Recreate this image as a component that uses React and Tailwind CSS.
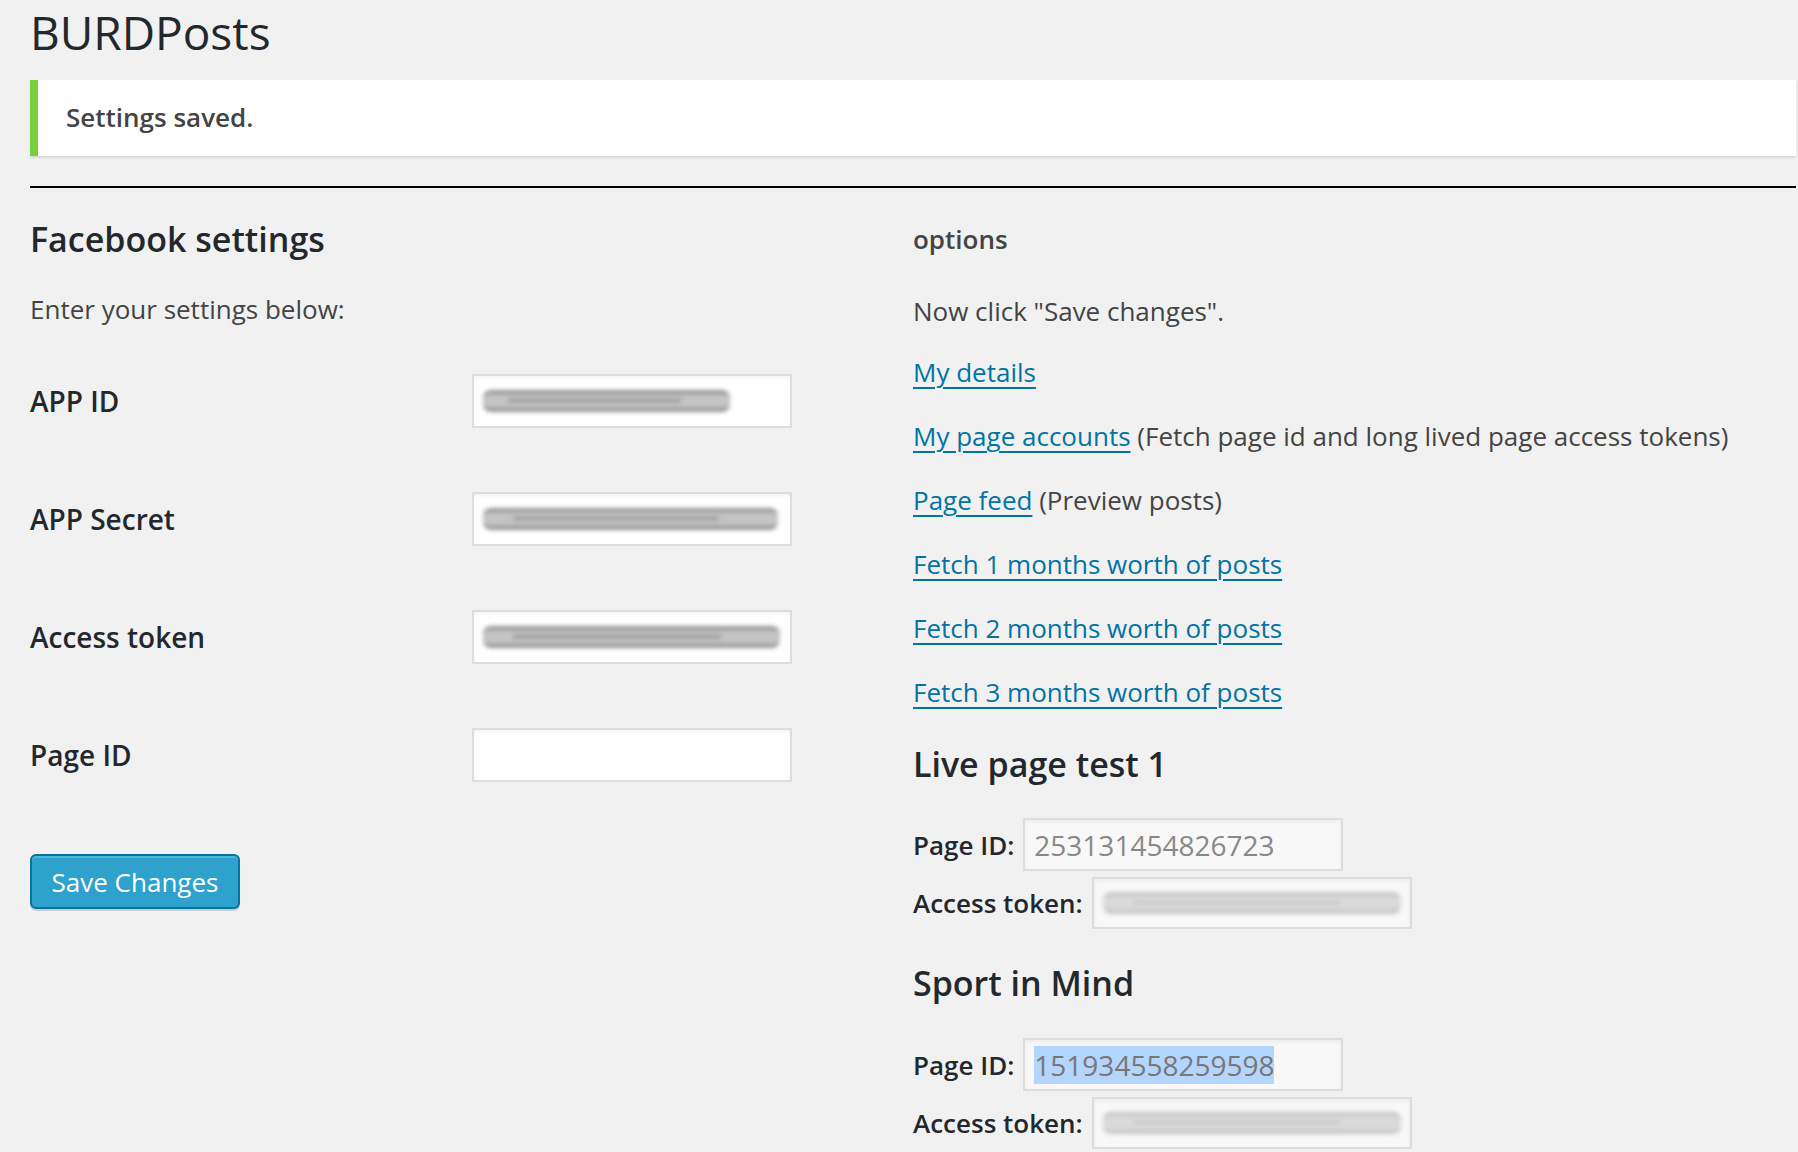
const Smear = ({ w, tone = "dark" }) => (
  <div className="relative h-[22px]" style={{ width: w }}>
    <div
      className={`absolute inset-0 rounded-[8px] blur-[2px] ${
        tone === "dark"
          ? "bg-[#c4c4c4] border-y-[4px] border-[#959595]"
          : "bg-[#dadada] border-y-[4px] border-[#c6c6c6]"
      }`}
    />
    <div
      className={`absolute left-[10%] right-[20%] top-[8px] h-[5px] blur-[2px] ${
        tone === "dark" ? "bg-[#a5a5a5]" : "bg-[#cdcdcd]"
      }`}
    />
  </div>
);

const FieldBox = ({ children, readOnly, h = "h-[54px]" }) => (
  <div
    className={`w-[320px] ${h} border-2 border-[#dddddd] flex items-center px-[9px] shadow-[inset_0_2px_4px_rgba(0,0,0,0.05)] ${
      readOnly ? "bg-[#f8f8f8]" : "bg-white"
    }`}
  >
    {children}
  </div>
);

const SettingRow = ({ label, children }) => (
  <div className="flex items-center h-[54px]">
    <div className="w-[442px] text-[28px] leading-[36px] font-semibold text-[#23282d]">
      {label}
    </div>
    <FieldBox>{children}</FieldBox>
  </div>
);

const PageRow = ({ label, children, className, h }) => (
  <div className={`flex items-center ${className}`}>
    <span className="text-[26px] leading-[36px] font-semibold text-[#23282d] mr-[9px]">
      {label}
    </span>
    <FieldBox readOnly h={h}>
      {children}
    </FieldBox>
  </div>
);

const links = [
  { text: "My details" },
  { text: "My page accounts", note: "(Fetch page id and long lived page access tokens)" },
  { text: "Page feed", note: "(Preview posts)" },
  { text: "Fetch 1 months worth of posts" },
  { text: "Fetch 2 months worth of posts" },
  { text: "Fetch 3 months worth of posts" },
];

export default function App() {
  return (
    <div className="min-h-screen bg-[#f1f1f1] pl-[30px] pr-[2px] text-[#444] font-['Open_Sans',sans-serif] overflow-hidden">
      <h1 className="pt-[3px] text-[46px] leading-[58px] font-normal text-[#23282d]">
        BURDPosts
      </h1>

      <div className="mt-[19px] h-[76px] bg-white border-l-[8px] border-[#7ad03a] shadow-[0_2px_2px_rgba(0,0,0,0.1)] pl-[28px] pt-[18px]">
        <p className="text-[26px] leading-[39px] font-semibold text-[#444]">
          Settings saved.
        </p>
      </div>

      <div className="mt-[30px] h-[2px] bg-black" />

      <div className="flex">
        {/* left: facebook settings form */}
        <div className="w-[883px] shrink-0">
          <h2 className="mt-[29px] text-[34px] leading-[44px] font-semibold text-[#23282d]">
            Facebook settings
          </h2>
          <p className="mt-[29px] text-[26px] leading-[39px]">
            Enter your settings below:
          </p>

          <div className="mt-[45px] flex flex-col gap-[64px]">
            <SettingRow label="APP ID">
              <Smear w={247} />
            </SettingRow>
            <SettingRow label="APP Secret">
              <Smear w={295} />
            </SettingRow>
            <SettingRow label="Access token">
              <Smear w={297} />
            </SettingRow>
            <SettingRow label="Page ID" />
          </div>

          <button className="mt-[72px] w-[210px] h-[55px] rounded-[6px] bg-[#2ea2cc] border-2 border-[#0074a2] text-white text-[26px] leading-[36px] shadow-[inset_0_2px_0_rgba(120,200,230,0.5),0_2px_0_rgba(0,0,0,0.15)]">
            Save Changes
          </button>
        </div>

        {/* right: options */}
        <div className="flex-1">
          <h3 className="mt-[32px] text-[26px] leading-[39px] font-semibold text-[#444]">
            options
          </h3>
          <p className="mt-[33px] text-[26px] leading-[39px]">
            Now click "Save changes".
          </p>
          <div className="mt-[22px] flex flex-col gap-[25px]">
            {links.map((l) => (
              <p key={l.text} className="text-[26px] leading-[39px]">
                <a href="#" className="text-[#0074a2] underline decoration-2 underline-offset-[5px]">
                  {l.text}
                </a>
                {l.note && <span> {l.note}</span>}
              </p>
            ))}
          </div>

          <h2 className="mt-[30px] text-[34px] leading-[44px] font-semibold text-[#23282d]">
            Live page test 1
          </h2>
          <PageRow label="Page ID:" className="mt-[32px]" h="h-[53px]">
            <span className="text-[28px] leading-[38px] text-[#888]">253131454826723</span>
          </PageRow>
          <PageRow label="Access token:" className="mt-[6px]" h="h-[52px]">
            <Smear w={302} tone="light" />
          </PageRow>

          <h2 className="mt-[32px] text-[34px] leading-[44px] font-semibold text-[#23282d]">
            Sport in Mind
          </h2>
          <PageRow label="Page ID:" className="mt-[33px]" h="h-[53px]">
            <span className="text-[28px] leading-[38px] text-[#777] bg-[#b4d5fe]">151934558259598</span>
          </PageRow>
          <PageRow label="Access token:" className="mt-[6px]" h="h-[52px]">
            <Smear w={300} tone="light" />
          </PageRow>
        </div>
      </div>
    </div>
  );
}
